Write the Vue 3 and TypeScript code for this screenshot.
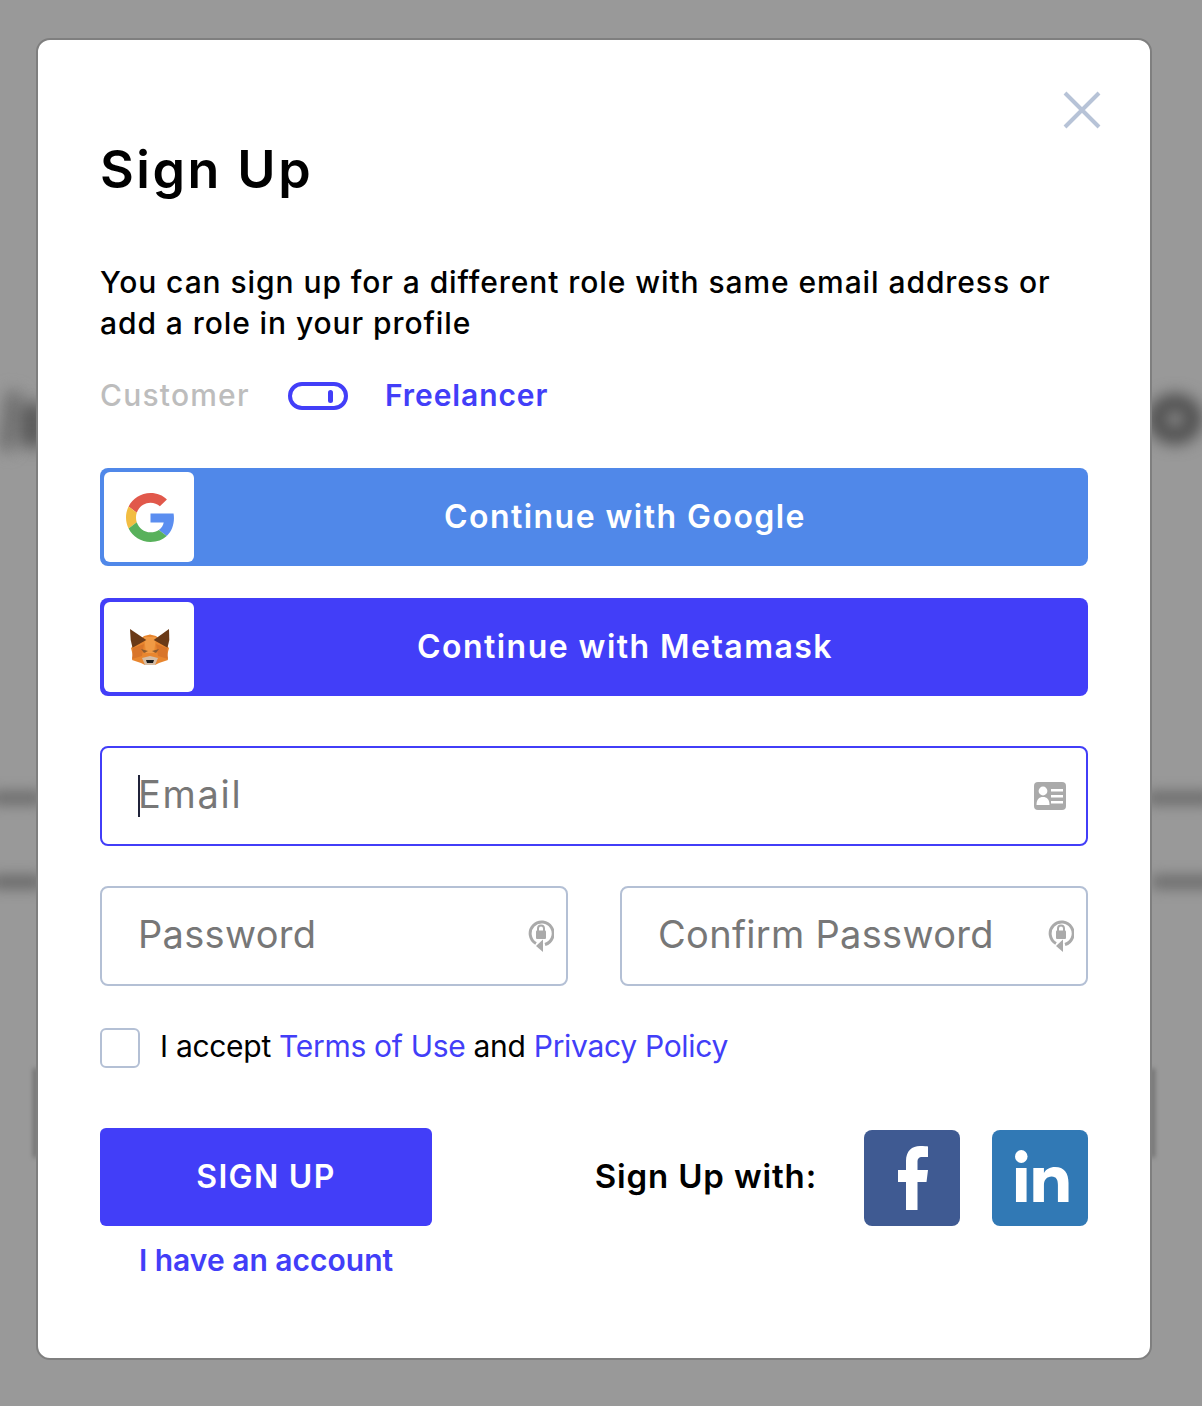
<script setup lang="ts">
const primary = 'Sign Up'
</script>

<template>
  <div class="page">
    <div class="backdrop" aria-hidden="true">
      <i class="blob b1"></i><i class="blob b2"></i><i class="blob b3"></i><i class="blob b4"></i>
      <i class="blob b5"></i><i class="blob b6"></i><i class="blob b7"></i><i class="blob b8"></i><i class="blob b9"></i>
    </div>
    <div class="modal">
      <button class="close" aria-label="Close">
        <svg width="40" height="40" viewBox="0 0 40 40"><path d="M3 3 37 37M37 3 3 37" stroke="#b7c3d7" stroke-width="4" fill="none"/></svg>
      </button>
      <h1 class="title">{{ primary }}</h1>
      <p class="lead">You can sign up for a different role with same email address or add a role in your profile</p>
      <div class="roles">
        <span class="role off">Customer</span>
        <span class="toggle"><i></i></span>
        <span class="role on">Freelancer</span>
      </div>
      <button class="wide google">
        <span class="logo">
          <svg class="g" width="49" height="49" viewBox="0 0 48 48">
            <path fill="#e1584b" d="M24 9.5c3.54 0 6.71 1.22 9.21 3.6l6.85-6.85C35.9 2.38 30.47 0 24 0 14.62 0 6.51 5.38 2.56 13.22l7.98 6.19C12.43 13.72 17.74 9.5 24 9.5z"/>
            <path fill="#5b8ef0" d="M46.98 24.55c0-1.57-.15-3.09-.38-4.55H24v9.02h12.94c-.58 2.96-2.26 5.48-4.78 7.18l7.73 6c4.51-4.18 7.09-10.36 7.09-17.65z"/>
            <path fill="#f2bd42" d="M10.53 28.59c-.48-1.45-.76-2.99-.76-4.59s.27-3.14.76-4.59l-7.98-6.19C.92 16.46 0 20.12 0 24c0 3.88.92 7.54 2.56 10.78l7.97-6.19z"/>
            <path fill="#58b15b" d="M24 48c6.48 0 11.93-2.13 15.89-5.81l-7.73-6c-2.15 1.45-4.92 2.3-8.16 2.3-6.26 0-11.57-4.22-13.47-9.91l-7.98 6.19C6.51 42.62 14.62 48 24 48z"/>
          </svg>
        </span>
        <span class="wide-label">Continue with Google</span>
      </button>
      <button class="wide meta">
        <span class="logo">
          <svg class="fox" width="40" height="37" viewBox="0 0 40 37">
            <path fill="#e8862f" d="M1 19 14 7 20 5.500 26 7 39 19 37 27 38 31 29 34 25 36 15 36 11 34 2 31 3 27z"/>
            <path fill="#f09a45" d="M14 8H26L24 24H16z"/>
            <path fill="#d9752a" d="M3 19 14 15 12 27 2 30zM37 19 26 15 28 27 38 30z"/>
            <path fill="#6b3a17" d="M0 0 16.300 11 2.500 18.700 .7 11z"/>
            <path fill="#6b3a17" d="M39 0 23.700 11 37.500 18.700 39.300 11z"/>
            <path fill="#8a5a30" d="M11 20 18 22 14 24zM29 20 22 22 26 24z"/>
            <path fill="#d5bda6" d="M12 29 20 27 28 29 25 36H15z"/>
            <path fill="#1d1c1a" d="M16 31H24L23 34H17z"/>
          </svg>
        </span>
        <span class="wide-label">Continue with Metamask</span>
      </button>
      <label class="field focus">
        <i class="caret"></i>
        <input class="email" type="text" placeholder="Email" />
        <svg class="id" width="32" height="28" viewBox="0 0 32 28">
          <rect width="32" height="28" rx="4" fill="#aaaaaa"/>
          <circle cx="9" cy="9" r="4.4" fill="#fff"/>
          <path fill="#fff" d="M2.5 23c0-5.500 2.500-8 6.500-8s6.500 2.500 6.500 8z"/>
          <path fill="#fff" d="M17 7H29V9.500H17zM17 13H29V15.500H17zM17 19H29V21.500H17z"/>
        </svg>
      </label>
      <div class="pair">
        <label class="field">
          <input type="password" placeholder="Password" />
          <svg class="lock" width="26" height="33" viewBox="0 0 26 33">
            <path fill="none" stroke="#aaaaaa" stroke-width="3" d="M8 23.500A11.500 11.500 0 1 1 17 24.500"/>
            <path fill="#aaaaaa" d="M15 19.500 8 26 15 32z"/>
            <path fill="none" stroke="#aaaaaa" stroke-width="2" d="M10 11V8.500a3 3 0 0 1 6 0V11"/>
            <rect x="8" y="10.500" width="10" height="8.500" rx="1" fill="#aaaaaa"/>
          </svg>
        </label>
        <label class="field">
          <input type="password" placeholder="Confirm Password" />
          <svg class="lock" width="26" height="33" viewBox="0 0 26 33">
            <path fill="none" stroke="#aaaaaa" stroke-width="3" d="M8 23.500A11.500 11.500 0 1 1 17 24.500"/>
            <path fill="#aaaaaa" d="M15 19.500 8 26 15 32z"/>
            <path fill="none" stroke="#aaaaaa" stroke-width="2" d="M10 11V8.500a3 3 0 0 1 6 0V11"/>
            <rect x="8" y="10.500" width="10" height="8.500" rx="1" fill="#aaaaaa"/>
          </svg>
        </label>
      </div>
      <div class="terms">
        <span class="box"></span>
        <span class="terms-text">I accept <a>Terms of Use</a> and <a>Privacy Policy</a></span>
      </div>
      <div class="actions">
        <div class="submit">
          <button class="signup">SIGN UP</button>
          <a class="have">I have an account</a>
        </div>
        <div class="social">
          <span class="with">Sign Up with:</span>
          <span class="tile fb">
            <svg class="f" width="30" height="64" viewBox="0 0 30 64"><path fill="#fff" d="M8 64V36H0V24H8V15C8 5 14 0 22 0 26 0 29 .3 30 .5V11H24.500C20.500 11 19.500 13 19.500 16V24H30L28.500 36H19.500V64z"/></svg>
          </span>
          <span class="tile in">
            <svg class="l" width="54" height="52" viewBox="0 0 56 52" preserveAspectRatio="none">
              <circle cx="6.500" cy="6.500" r="6.500" fill="#fff"/>
              <path fill="#fff" d="M1 18H12V52H1zM19 18H30V23C32 19.500 36 17 41.500 17 51 17 55.500 23 55.500 33V52H44.500V35C44.500 30 43 26.500 38 26.500 33 26.500 30 30 30 35V52H19z"/>
            </svg>
          </span>
        </div>
      </div>
    </div>
  </div>
</template>

<style>
html, body { margin: 0; background: #999999; }
</style>

<style scoped>
.page {
  position: relative;
  height: 1406px;
  overflow: hidden;
  background: #999999;
  font-family: Inter, "Liberation Sans", sans-serif;
  color: #000;
  box-sizing: border-box;
  padding: 38px 50px 0 36px;
}
.backdrop { position: absolute; inset: 0; }
.blob { position: absolute; background: #5c5c5c; filter: blur(8px); border-radius: 10px; }
.b1 { left: 3px; top: 390px; width: 14px; height: 62px; background: #6a6a6a; transform: rotate(8deg); }
.b2 { left: 18px; top: 402px; width: 28px; height: 46px; }
.b3 { left: -10px; top: 792px; width: 54px; height: 12px; background: #666; filter: blur(7px); }
.b4 { left: -10px; top: 876px; width: 54px; height: 12px; background: #626262; filter: blur(7px); }
.b5 { left: 33px; top: 1068px; width: 4px; height: 90px; filter: blur(2px); background: #6e6e6e; }
.b6 { left: 1148px; top: 394px; width: 54px; height: 50px; box-sizing: border-box; background: transparent; border: 17px solid #4a4a4a; border-radius: 50%; filter: blur(8px); }
.b7 { left: 1145px; top: 792px; width: 70px; height: 12px; background: #666; filter: blur(7px); }
.b8 { left: 1150px; top: 876px; width: 70px; height: 12px; background: #666; filter: blur(7px); }
.b9 { left: 1151px; top: 1068px; width: 4px; height: 90px; filter: blur(2px); background: #6e6e6e; }
.modal {
  position: relative;
  width: 1116px;
  height: 1322px;
  box-sizing: border-box;
  border: 2px solid #7f7f7f;
  border-radius: 14px;
  background: #fff;
  padding: 0 62px;
  display: flex;
  flex-direction: column;
}
.close {
  position: absolute;
  right: 48px;
  top: 50px;
  padding: 0;
  border: 0;
  background: none;
  line-height: 0;
}
.title {
  margin: 96px 0 0;
  height: 68px;
  font-size: 52px;
  line-height: 68px;
  font-weight: 600;
  letter-spacing: 2.5px;
}
.lead {
  margin: 58px 0 0 0;
  font-size: 30px;
  line-height: 41px;
  font-weight: 500;
  letter-spacing: 0.92px;
  max-width: 988px;
}
.roles {
  margin-top: 38px;
  height: 28px;
  display: flex;
  align-items: center;
  font-size: 30px;
  font-weight: 500;
}
.role { padding-bottom: 2px; }
.role.off { color: #bdbdbd; width: 188px; letter-spacing: 1.2px; }
.role.on { color: #423ef8; font-weight: 600; letter-spacing: 0.9px; }
.toggle {
  width: 60px;
  height: 28px;
  box-sizing: border-box;
  border: 4px solid #423ef8;
  border-radius: 14px;
  margin-right: 37px;
  display: flex;
  align-items: center;
  justify-content: flex-end;
  padding-right: 11px;
}
.toggle i { width: 5px; height: 13px; border-radius: 2.5px; background: #423ef8; }
.wide {
  display: flex;
  align-items: center;
  height: 98px;
  margin: 0;
  padding: 4px;
  border: 0;
  border-radius: 8px;
  color: #fff;
  font-family: inherit;
  font-size: 32px;
  font-weight: 600;
  letter-spacing: 1.45px;
}
.wide.google { background: #5088e9; margin-top: 58px; }
.wide.meta { background: #423ef8; margin-top: 32px; }
.logo {
  width: 90px;
  height: 90px;
  flex: none;
  background: #fff;
  border-radius: 6px;
  display: flex;
  align-items: center;
  justify-content: center;
}
.g { margin-left: 2px; }
.fox { margin-left: 2px; }
.wide-label { flex: 1; text-align: center; padding-right: 28px; padding-bottom: 2px; }
.field {
  display: flex;
  align-items: center;
  position: relative;
  box-sizing: border-box;
  height: 100px;
  border: 2px solid #b4c0d5;
  border-radius: 8px;
  padding: 0 12px 0 36px;
  background: #fff;
  min-width: 0;
}
.field.focus { border-color: #423ef8; margin-top: 50px; }
.caret { position: absolute; left: 36px; top: 27px; width: 2px; height: 42px; background: #20233a; }
.field input {
  flex: 1;
  min-width: 0;
  border: 0;
  outline: 0;
  padding: 0 0 4px;
  background: transparent;
  font-family: inherit;
  font-size: 38px;
  font-weight: 400;
  letter-spacing: 0.3px;
  color: #777;
}
.field input.email { letter-spacing: 1.7px; }
.field input::placeholder { color: #777; opacity: 1; }
.id { flex: none; margin-right: 8px; }
.lock { flex: none; }
.pair { display: grid; grid-template-columns: 468px 468px; gap: 52px; margin-top: 40px; }
.terms {
  margin-top: 42px;
  display: flex;
  align-items: center;
  gap: 20px;
  height: 40px;
  font-size: 30px;
  font-weight: 400;
  letter-spacing: -0.3px;
}
.terms-text { padding-bottom: 4px; }
.terms a { color: #423ef8; }
.box { width: 40px; height: 40px; box-sizing: border-box; border: 2px solid #b4c0d5; border-radius: 6px; flex: none; }
.actions { margin-top: 60px; display: flex; justify-content: space-between; }
.submit { width: 332px; display: flex; flex-direction: column; align-items: center; }
.signup {
  width: 332px;
  height: 98px;
  border: 0;
  border-radius: 6px;
  background: #423ef8;
  color: #fff;
  font-family: inherit;
  font-size: 32px;
  font-weight: 600;
  letter-spacing: 1.3px;
  padding: 0 0 2px;
}
.have { margin-top: 15px; line-height: 38px; font-size: 30px; font-weight: 600; color: #423ef8; }
.social { display: flex; align-items: center; height: 96px; margin-top: 2px; }
.with { font-size: 33px; font-weight: 600; margin-right: 47px; letter-spacing: 0.85px; margin-bottom: 4px; }
.tile { width: 96px; height: 96px; border-radius: 8px; display: flex; align-items: center; justify-content: center; }
.tile.fb { background: #3f5a92; }
.tile.in { background: #3179b5; margin-left: 32px; }
.f { margin-left: 2px; }
.l { margin-left: 4px; margin-top: -4px; }
</style>
